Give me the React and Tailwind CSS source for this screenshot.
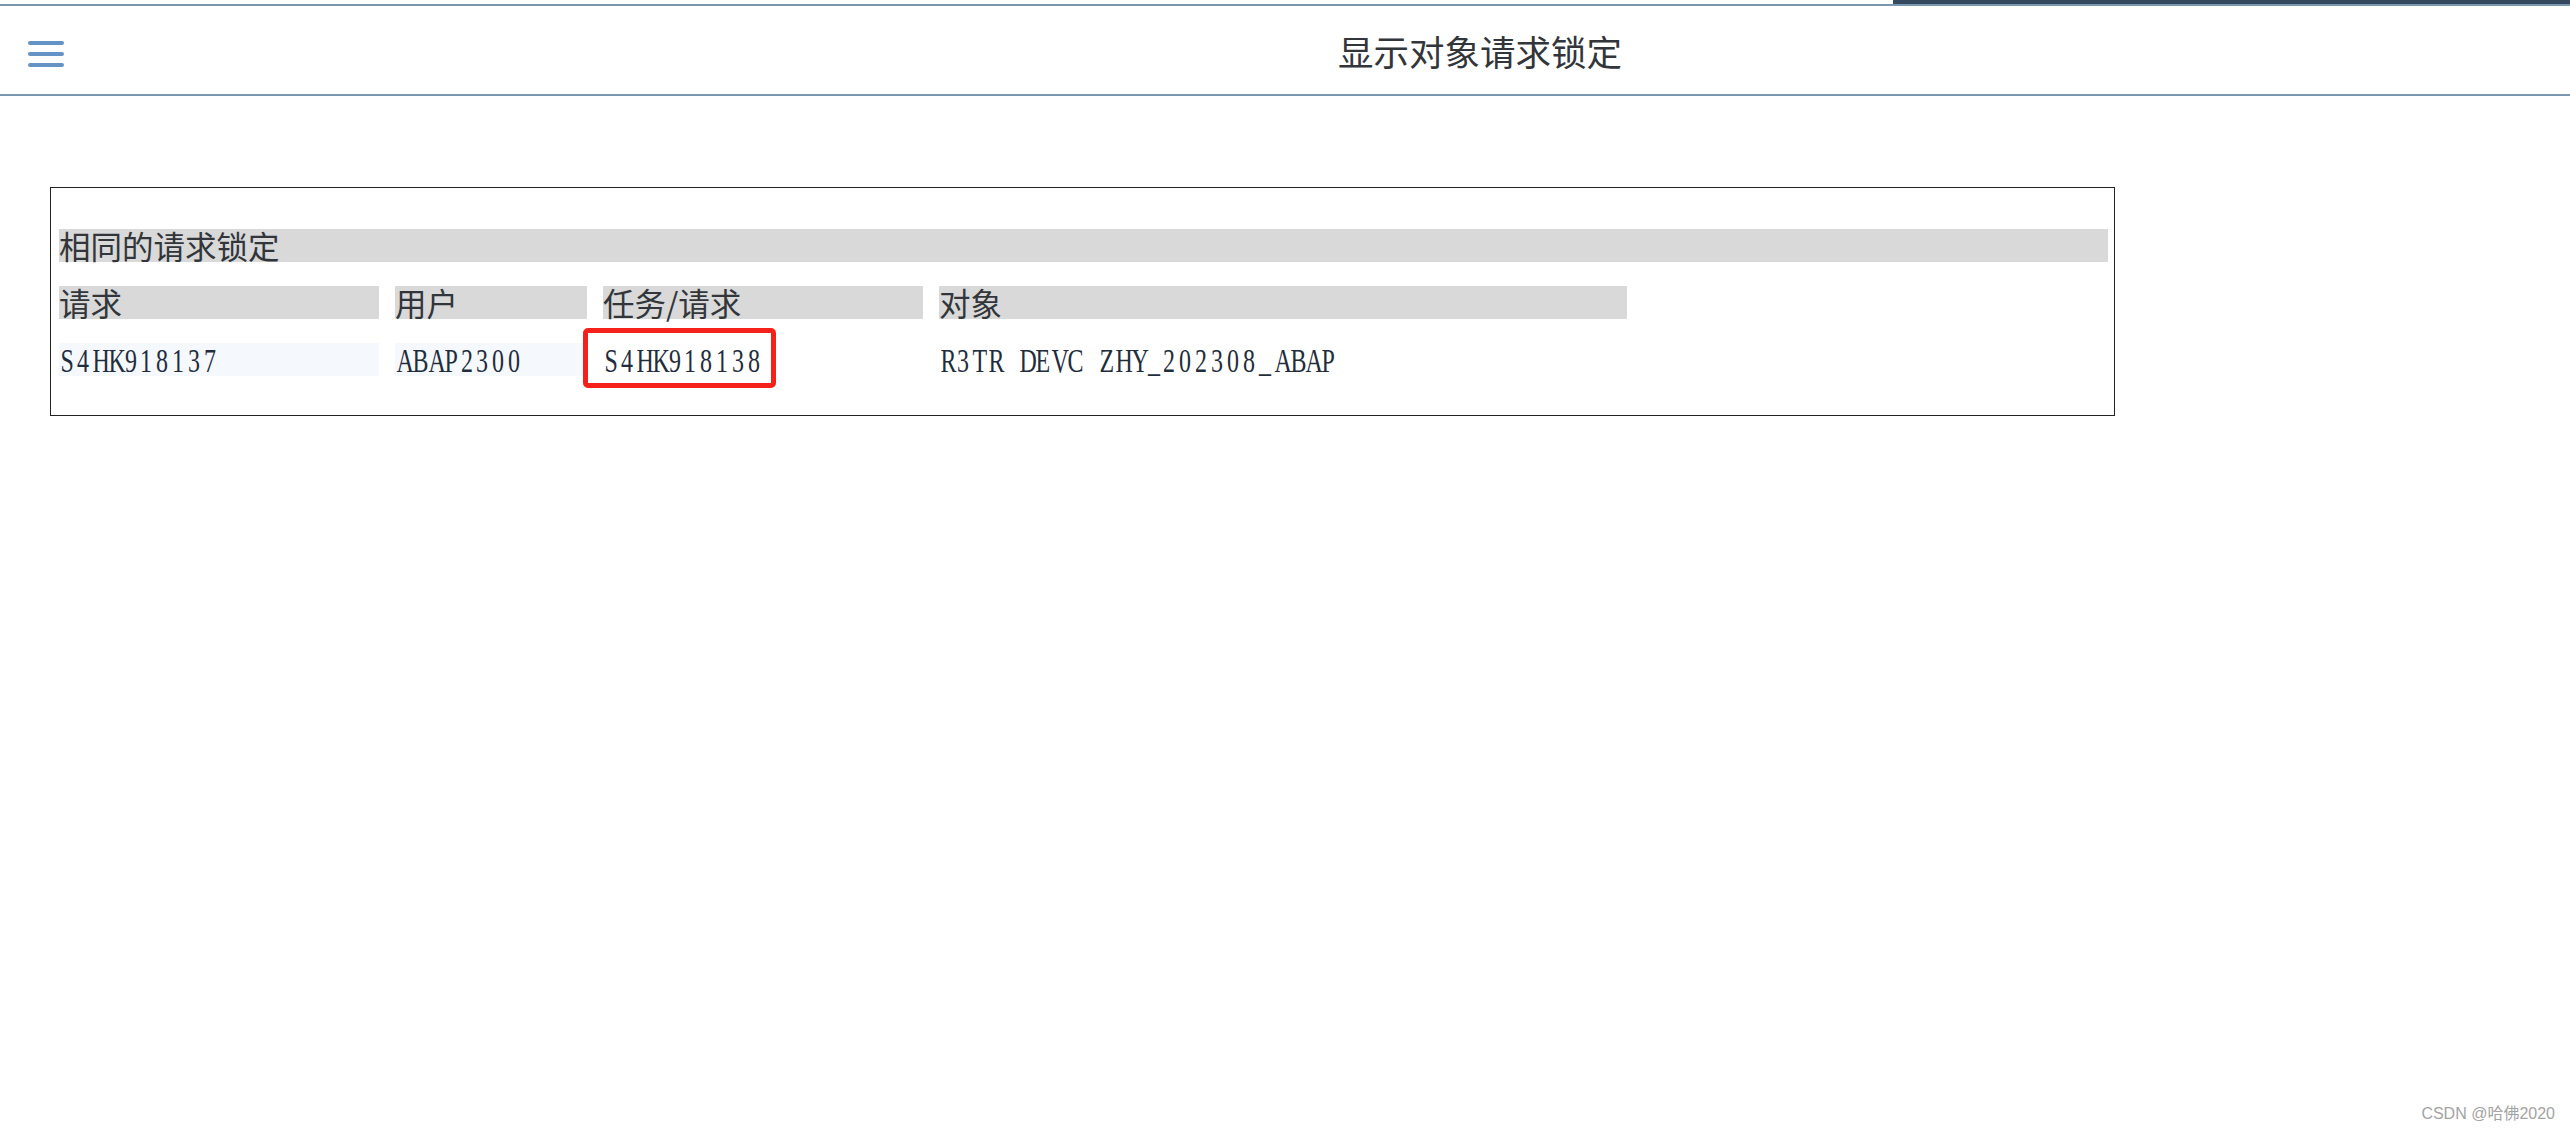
import React from "react";

const columns = [
  { label: "请求", width: "w-[320px]" },
  { label: "用户", width: "w-[192px]" },
  { label: "任务/请求", width: "w-[320px]" },
  { label: "对象", width: "w-[688px]" },
];

const row = ["S4HK918137", "ABAP2300", "S4HK918138", "R3TR DEVC ZHY_202308_ABAP"];

const CjkText = ({ children }) => (
  <span className="font-['Noto_Sans_CJK_SC',sans-serif] text-[31.5px] leading-[33px] text-[#32363a]">
    {children}
  </span>
);

// SAP GUI renders these in a narrow fixed-pitch serif; fake it with fixed cells
const DataText = ({ children }) => (
  <span className="flex font-['Liberation_Serif',serif] text-[30px] leading-[33px] text-[#1f2d3d]">
    {children.split("").map((ch, i) => (
      <span key={i} className="inline-block w-[15.9px] scale-x-[0.8] scale-y-[1.15] text-center">
        {ch === " " ? "\u00a0" : ch}
      </span>
    ))}
  </span>
);

export default function App() {
  return (
    <div className="relative h-[1132px] w-[2570px] overflow-hidden bg-white">
      {/* shell header */}
      <div className="flex h-[4px]">
        <div className="flex-1 bg-white" />
        <div className="w-[677px] bg-[#354a5f]" />
      </div>
      <div className="h-[2px] bg-[#7b97b0]" />
      <div className="flex h-[88px] items-start">
        <button type="button" className="ml-[28px] mt-[35px] flex flex-col gap-[7px]">
          <span className="block h-[4px] w-[36px] rounded-full bg-[#6693c6]" />
          <span className="block h-[4px] w-[36px] rounded-full bg-[#6693c6]" />
          <span className="block h-[4px] w-[36px] rounded-full bg-[#6693c6]" />
        </button>
        <h1 className="ml-[1274px] mt-[27px] font-['Noto_Sans_CJK_SC',sans-serif] text-[35.5px] leading-[35px] font-normal text-[#32363a]">
          显示对象请求锁定
        </h1>
      </div>
      <div className="h-[2px] bg-[#7b97b0]" />

      {/* content */}
      <div className="pl-[50px] pt-[91px]">
        <div className="h-[229px] w-[2065px] border border-[#222] pl-[8px] pr-[6px] pt-[41px]">
          <div className="flex h-[33px] items-center bg-[#d9d9d9]">
            <CjkText>相同的请求锁定</CjkText>
          </div>

          <div className="mt-[24px] flex h-[33px] gap-[16px]">
            {columns.map((c) => (
              <div key={c.label} className={`${c.width} flex items-center bg-[#d9d9d9]`}>
                <CjkText>{c.label}</CjkText>
              </div>
            ))}
          </div>

          <div className="mt-[24px] flex h-[33px] gap-[16px]">
            <div className="flex w-[320px] items-center bg-[#f5f9fd]">
              <DataText>{row[0]}</DataText>
            </div>
            <div className="flex w-[192px] items-center bg-[#f5f9fd]">
              <DataText>{row[1]}</DataText>
            </div>
            <div className="relative flex w-[320px] items-center">
              <DataText>{row[2]}</DataText>
              {/* highlight annotation */}
              <div className="absolute left-[-20px] top-[-15px] h-[60px] w-[193px] rounded-[5px] border-[5px] border-[#f5221b]" />
            </div>
            <div className="flex w-[688px] items-center">
              <DataText>{row[3]}</DataText>
            </div>
          </div>
        </div>
      </div>

      <div className="absolute bottom-[8px] right-[15px] font-['Liberation_Sans','Noto_Sans_CJK_SC',sans-serif] text-[16px] leading-[20px] text-[#a3a3a3]">
        CSDN @哈佛2020
      </div>
    </div>
  );
}
